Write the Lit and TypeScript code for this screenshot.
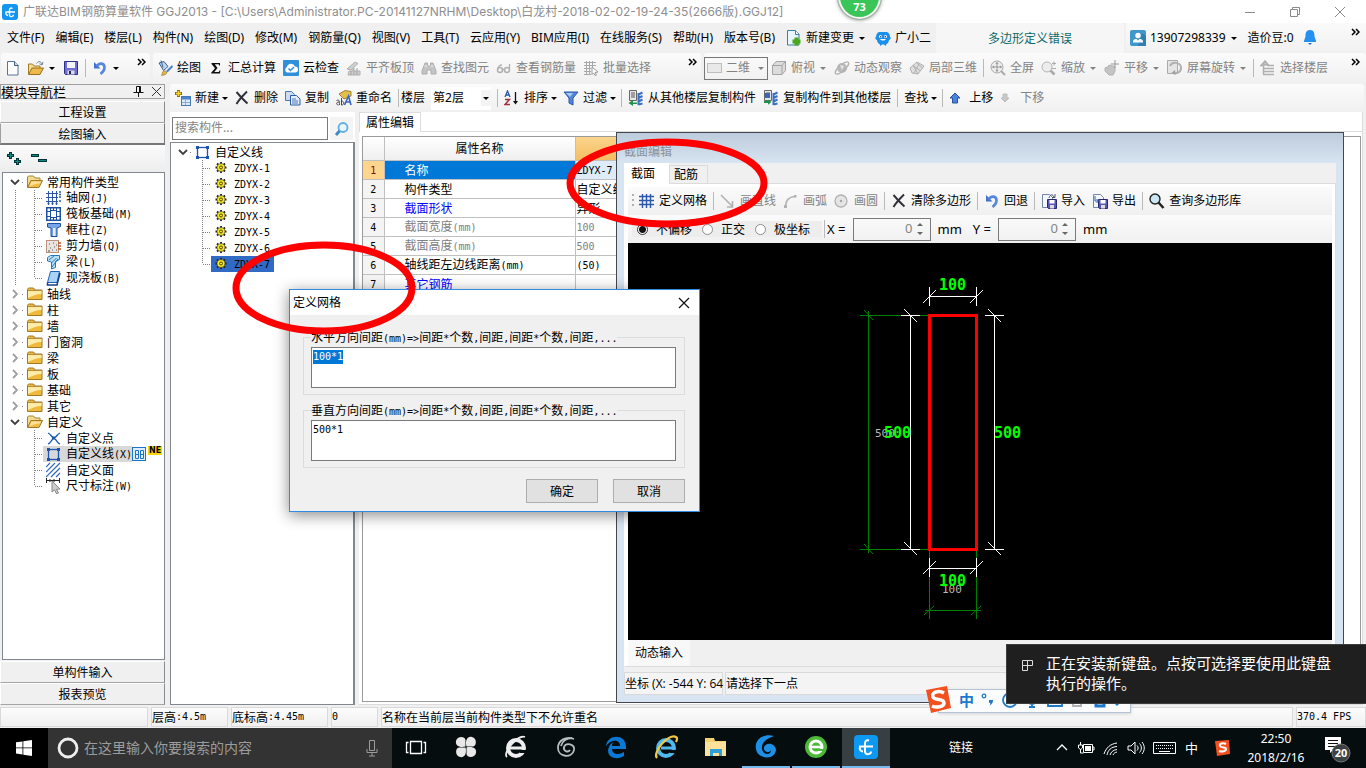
import { LitElement, html, css, svg, nothing } from "lit";
import { customElement, state } from "lit/decorators.js";
import { classMap } from "lit/directives/class-map.js";

type Fragment = ReturnType<typeof svg>;

const disk = svg`<path d="M6.500 6.500h9v9h-8l-1-1z" fill="#5a55b8" stroke="#2c2870"/><rect x="8.500" y="7" width="5" height="3.500" fill="#fff"/><rect x="9" y="12" width="4" height="3.500" fill="#ddd"/>`;
const page = svg`<path d="M1.500 1.500h7l3 3v10h-10z" fill="#f4f8fc" stroke="#7387a6"/>`;
const copyTo = svg`<path d="M1.500.500h7v10h-7z" fill="#e8e8e8" stroke="#666"/><path d="M3 3h4M3 5h4M3 7h4" stroke="#555"/><path d="M10.500 4.500l4-2M10.500 8l4-2M10.500 11.500l4-2M10.500 14.500l4-1M10.500 3v12" stroke="#3a6fc4" stroke-width="2"/>`;

const ICONS: Record<string, Fragment> = {
  app: svg`<rect width="16" height="16" rx="3" fill="#1296f0"/><path d="M10.500 4.500c-2-1.200-3 0-3 1.500v5c0 2.500 4 2 4-.3M3.500 8h9.500M4 8c-.5 2 .5 3.300 2 3.500" fill="none" stroke="#fff" stroke-width="1.400"/>`,
  file: svg`<path d="M2.500 1.500h7l3.500 3.500v10h-10.500z" fill="#fbfdff" stroke="#5b7396"/><path d="M9.500 1.500v4h4" fill="#cfdded" stroke="#41597e"/>`,
  open: svg`<path d="M.500 14v-10h4l1.500 2h6v2" fill="#f5dc8c" stroke="#a07a2c"/><path d="M.500 14.500l3.500-6.500h11.500l-3.500 6.500z" fill="#ecb94c" stroke="#9a7020"/><path d="M8.500 3.500c2-3 5-2 5.500 1m1-2.500l-1 3-2.500-1.200" fill="none" stroke="#687f96"/>`,
  save: svg`<path d="M1.500 1.500h13v13h-12l-1-1z" fill="#6f6fd0" stroke="#2e2e86"/><rect x="4" y="2" width="8" height="6" fill="#f3f3fc"/><rect x="4.500" y="10.500" width="7" height="4" fill="#dcdce8"/><rect x="6" y="11" width="2" height="3" fill="#23235c"/>`,
  undo: svg`<path d="M2 2v6.500h6.500z" fill="#3f72cc"/><path d="M4.500 6.500C7 2.500 12.500 2.500 12.500 7.500c0 3-2 5-4 6.500" fill="none" stroke="#5585dd" stroke-width="2.600"/>`,
  paint: svg`<path d="M2 3l5-1.500 4 5-4.500 4z" fill="#b9d7f4" stroke="#3d5f8c"/><path d="M4 0.500l2 7" stroke="#3d5f8c"/><path d="M15 5l-6 6 1.500 1.500L16 7z" fill="#4d82cc"/><path d="M6 11.500c2-1.500 4 0 3.500 2-1.500 2-4 1.500-5 2 1-1 .5-3 1.500-4z" fill="#e3b43c" stroke="#8c6a16" stroke-width=".6"/>`,
  sigma: svg`<path d="M3.500 3h8.500v2.500h-.8l-.5-1.300H6.800L9.500 8l-3.200 4h4.500l.8-1.600h.8L12 13.500H3.200v-.8L7 8.300 3.500 4z" fill="#111"/>`,
  cloud: svg`<rect width="16" height="16" rx="1" fill="#2f8fd8"/><path d="M4 12.500a3 3 0 0 1 0-5.500 4.200 4.200 0 0 1 8-.5 3 3 0 0 1 0 6z" fill="#fff"/><path d="M5.500 8.500l2 2 3.500-3.500" fill="none" stroke="#2f8fd8" stroke-width="1.500"/>`,
  align: svg`<path d="M1 9l8-7 3 1.500-5 4.500v2zM3 11h11v4H2z" fill="#cfcfcf" stroke="#b0b0b0"/><path d="M5 11v4M8 8v7M11 8v7" stroke="#a5a5a5"/>`,
  bino: svg`<path d="M4 3h2.500v3h3V3H12l3 8v3h-5v-4H6v4H1v-3z" fill="#c4c4c4" stroke="#adadad"/><path d="M3.500 6h3M9.500 6h3" stroke="#eee"/>`,
  glasses: svg`<circle cx="4" cy="10" r="2.500" fill="none" stroke="#b0b0b0" stroke-width="1.500"/><circle cx="11" cy="10" r="2.500" fill="none" stroke="#b0b0b0" stroke-width="1.500"/><path d="M6.500 9.500h2M2 9C2 6 4 5 6 5M13.500 9.500V4" fill="none" stroke="#b0b0b0" stroke-width="1.300"/>`,
  batch: svg`<path d="M1 2.500h12M1 5.500h12M1 8.500h7M1 11.500h7M1 14.500h7M3.500 1v14M6.500 1v14M9.500 1v6" stroke="#a8a8a8"/><path d="M9 7l6 5-3 .5 1.500 2.500-1.500.5-1.500-2.500-1.500 1.500z" fill="#fff" stroke="#999"/>`,
  flat: svg`<rect x=".5" y="3.500" width="14" height="9" fill="#e9e9e9" stroke="#bdbdbd"/>`,
  cube: svg`<path d="M1.500 5.500l3.500-4h9.500v9l-3.500 4H1.500z" fill="#dcdcdc" stroke="#a3a3a3"/><path d="M1.500 5.500h9.500v9M11 5.500l3.500-4" fill="none" stroke="#a3a3a3"/>`,
  orbit: svg`<circle cx="8" cy="8" r="5" fill="#b9b9b9"/><ellipse cx="8" cy="8" rx="8.500" ry="3" transform="rotate(-42 8 8)" fill="none" stroke="#b2b2b2" stroke-width="1.300"/><path d="M6 5l4 1-2 4z" fill="#e6e6e6"/>`,
  local3d: svg`<path d="M1 8l7-6 7 4-6 8-6-1z" fill="#dedede" stroke="#b0b0b0"/><path d="M4 5.500l7 5M7.500 2.500L13.500 8M5 13l5-9M9 14l-5-9" stroke="#b0b0b0"/>`,
  full: svg`<circle cx="7" cy="7" r="6" fill="#ededed" stroke="#a8a8a8"/><path d="M7 2.500v9M2.500 7h9" stroke="#999"/><path d="M7 2l-1.500 2h3zM7 12l-1.500-2h3zM2 7l2-1.500v3zM12 7l-2-1.500v3z" fill="#999"/><path d="M11 11l4 4" stroke="#aaa" stroke-width="2"/>`,
  zoom: svg`<circle cx="6" cy="7" r="5" fill="#ededed" stroke="#b5b5b5"/><path d="M9.500 10.500l4 4" stroke="#aaa" stroke-width="2.500"/><path d="M11 3.500h4M13 1.500v4M11 8.500h4" stroke="#aaa"/>`,
  pan: svg`<path d="M1 8l1.500-1L4 9V6l2-1 2 1h2l1 1v4l-2 4H5l-4-4z" fill="#c4c4c4" stroke="#b0b0b0"/><path d="M11 0v8M7 4h8" stroke="#999"/>`,
  rotate: svg`<path d="M.500.500h10v13H.500z" fill="#e5e5e5" stroke="#aaa"/><path d="M3 6c2-5 11-4 11 2 0 4-4 6-8 5" fill="none" stroke="#b0b0b0" stroke-width="2"/><path d="M8 10l-3.500 3 4 2z" fill="#a0a0a0"/>`,
  floors: svg`<path d="M1 5.500L5 1l3 3.500zM3.500 5v9M3 8.500h11M3 11.500h11M3 14.500h11M7 5.500h7" stroke="#b0b0b0" fill="#c5c5c5" stroke-width="1.500"/>`,
  create: svg`<rect x="6.500" y="6.500" width="9" height="9" fill="#dce9f8" stroke="#4878b4"/><rect x="7" y="7" width="8" height="2.500" fill="#4b84cd"/><path d="M7 12.500h8M10.500 10v5" stroke="#8cabd4"/><path d="M3.500 0v7M0 3.500h7" stroke="#8e6d08" stroke-width="3"/><path d="M3.500 1v5M1 3.500h5" stroke="#f6d535" stroke-width="1.600"/>`,
  cross: svg`<path d="M2.500 2C6 6 10 10.500 13.500 13.500M13 1.500C9 5.500 5 9.500 2.500 14" fill="none" stroke="#2f3038" stroke-width="1.900"/>`,
  copy: svg`<path d="M.500 1.500h6l3 3v6h-9z" fill="#cbdcf3" stroke="#4c76b4"/><path d="M5.500 5.500h6l3.500 3.500v6H5.500z" fill="#e3eefc" stroke="#2d5aa2"/><path d="M7 9h4M7 11h6M7 13h6" stroke="#4c76b4"/>`,
  rename: svg`<path d="M3 4l6-3.500 6 1V6L8 9z" fill="#e4bf4e" stroke="#8c6a16" stroke-width=".8"/><path d="M8.500 15l4-9 2.500 9M9.500 12h5" fill="none" stroke="#3a62c0" stroke-width="1.600"/><path d="M.500 10.500c3-1 3 0 3 4.500M3 12c-3 0-3 3-.5 3M5.500 8v7c3 0 3-4 0-4" fill="none" stroke="#444"/>`,
  sort: svg`<path d="M1 7l2.500-6L6 7M2 5h3" fill="none" stroke="#2f55a8" stroke-width="1.300"/><path d="M1 9.500h4.500L1 14.500h5" fill="none" stroke="#a02f3c" stroke-width="1.400"/><path d="M11.500 2v11" stroke="#111" stroke-width="1.300"/><path d="M9 11h5l-2.500 3.500z" fill="#111"/>`,
  filter: svg`<path d="M1 2h14l-5 6v7l-4-2V8z" fill="#4f86e0" stroke="#2c55a8"/><path d="M3 3h7l-3 4z" fill="#a9cbfa"/>`,
  fromFloor: svg`${copyTo}<path d="M9 12.500H5v-2.500L.500 13 5 16V14h4z" fill="#21914a"/>`,
  toFloor: svg`${copyTo}<path d="M2 3h5v5H2z" fill="#3e63b8"/><path d="M1 11h4V9.500L8.500 12 5 14.800V13H1z" fill="#21914a"/>`,
  up: svg`<path d="M6 3l5 5H8.500v5h-5V8H1z" fill="#4a82e2" stroke="#2b509c"/>`,
  down: svg`<path d="M5 12L1 8h2V4h4v4h2z" fill="#c8c8c8" stroke="#bcbcbc"/>`,
  change: svg`<path d="M1.500.500h8l3.500 3.500v11H1.500z" fill="#eaf6fd" stroke="#3c7fa4"/><path d="M9.500.500v4H13" fill="#fff" stroke="#3c7fa4"/><path d="M10.500 7.500v8M6.500 11.500h8" stroke="#49a81b" stroke-width="4"/>`,
  robot: svg`<path d="M4 2h8c2 1 3 2.500 3 5l1 1-1.500 2H14c-.3 2-1 3.500-2.500 4l-1 2-1.500-1.500H7L5.500 16l-1-2C3 13.500 2.300 12 2 10H1.500L0 8l1-1c0-2.500 1-4 3-5z" fill="#1c8fe8"/><circle cx="5.500" cy="6.500" r="1.500" fill="#fff"/><circle cx="10.500" cy="6.500" r="1.500" fill="#fff"/><circle cx="5.700" cy="6.700" r=".7" fill="#123"/><circle cx="10.300" cy="6.700" r=".7" fill="#123"/><path d="M5 9c1.500 2 4.500 2 6 0z" fill="#fff"/>`,
  user: svg`<rect width="16" height="16" rx="2" fill="#3f97cc"/><path d="M8 16h8V6l-4-3z" fill="#2f7fb2"/><circle cx="8" cy="5.500" r="2.700" fill="#fff"/><path d="M3 12.500V11c1-2 2.500-2 3.500-2L8 10.500 9.500 9c1 0 2.500 0 3.500 2v1.500z" fill="#fff"/>`,
  bell: svg`<path d="M6 0c4 0 4.500 3 4.500 6.500L12 11v1H0v-1l1.500-4.500C1.500 3 2 0 6 0z" fill="#2490f2"/><path d="M4 13h4l-2 2z" fill="#1b6fc8"/>`,
  grid: svg`<path d="M0 3.500h15M0 7.500h15M0 11.500h15M3.500 1v14M7.500 1v14M11.500 1v14" stroke="#2b57ac" stroke-width="1.400"/>`,
  axis: svg`<path d="M0 3.500h12M0 7.500h12M0 11.500h12M2.500 1v14M6.500 1v14M10.500 1v14" stroke="#2b57ac"/><path d="M13 2h2M13 4.500h2M13 7h2M13 11h2M1.500 13.500h2M5.500 13.500h2M9.500 13.500h2" stroke="#2b57ac" stroke-width="1.500"/>`,
  raft: svg`<rect x=".75" y="1.750" width="13.500" height="12.500" fill="#fff" stroke="#1d50a0" stroke-width="1.500"/><rect x="4.500" y="4.500" width="6" height="7" fill="none" stroke="#1d50a0"/><path d="M4.500 1v3M7.500 1v3M10.500 1v3M4.500 12v3M7.500 12v3M10.500 12v3M1 5.500h3M1 10.500h3M11 5.500h3M11 10.500h3" stroke="#1d50a0"/>`,
  column: svg`<path d="M1.500 1.500h13v3l-3.500 1.500v8.500h-6V6l-3.500-1z" fill="#78a5ea" stroke="#1d50a0"/><path d="M7 6h2.500v8H7z" fill="#e2eefc"/>`,
  wall: svg`<rect x=".5" y="2.500" width="12" height="12" fill="#e9e4e0" stroke="#b9917c"/><path d="M3 6h1M7 5h1M10 7h1M4 10h1M8 9h1M6 12h1M10 12h1M2 13h2" stroke="#555" stroke-width="1.200"/><path d="M12 5h3M12 8h3M12 11h3" stroke="#c0531c" stroke-width="1.300"/>`,
  beam: svg`<path d="M1.500 3.500l3-2h9v4l-4 2v6l-4 1.500v-7l-4-1z" fill="#b9e0f6" stroke="#2478b8"/><path d="M3 6l5-4M5.500 9l5-5M6 13l6-8" stroke="#2478b8"/>`,
  slab: svg`<path d="M4.500 1.500h9l-2.500 11H1.500z" fill="#a9d2f6" stroke="#2360b0"/><path d="M1.500 12.500v2.500h9.500l3-12" fill="none" stroke="#123f86" stroke-width="1.500"/>`,
  folder: svg`<path d="M.500 13.500V3.500L1.500 2h5l1.500 2h7v9.500z" fill="#efb93c" stroke="#a07828"/><path d="M1 5h13.500v3c-5 0-9 2-13.500 4z" fill="#fdebA8"/><path d="M1 4.500h14" stroke="#b88d34"/>`,
  folderOpen: svg`<path d="M.500 13.500V3L1.500 2h5l1.500 2h5v3" fill="#f3dc8f" stroke="#a98435"/><path d="M.500 13.500L4 6.500h11.500L12 13.500z" fill="#f0bc48" stroke="#a07828"/><path d="M4.500 7.500h9.500l-1 2c-4 0-7 1-10.500 3z" fill="#fbe29a"/>`,
  point: svg`<path d="M2 3c3 1 3 4 6 5 3-1 3-4 6-5M2 14c3-1 3-4 6-6 3 2 3 5 6 6" fill="none" stroke="#1e5aa8" stroke-width="1.300"/><rect x="6" y="6.500" width="3" height="3" fill="#1e5aa8"/>`,
  line: svg`<rect x="2.500" y="3.500" width="10" height="10" fill="none" stroke="#1c54b0" stroke-width="1.300"/><path d="M1 2h3v3H1zM11 2h3v3h-3zM1 12h3v3H1zM11 12h3v3h-3z" fill="#1c54b0"/>`,
  area: svg`<path d="M0 5l4-4M0 10l9-9M0 15l14-14M5 15l9-9M10 15l4-4" stroke="#3569b8" stroke-width="1.200"/>`,
  dim: svg`<path d="M.500 0v5M13.500 0v5M1 2.500h12M4 1v3M8 1v3" stroke="#222"/><path d="M6 3l8 8-3.500.3L12.500 15l-2 .8-2-4L6 14z" fill="#ccc" stroke="#888"/>`,
  gear: svg`<path d="M7 2v11M1.500 7.500h11M3 3.500l8 8M11 3.500l-8 8" stroke="#222" stroke-width="1.800"/><circle cx="7" cy="7.500" r="4" fill="#f7ea1e" stroke="#333" stroke-width=".6"/><circle cx="7" cy="7.500" r="1.500" fill="#f7ea1e" stroke="#222" stroke-width=".8"/>`,
  lens: svg`<circle cx="9" cy="6.500" r="4.500" fill="#e8f5fd" stroke="#5db0e4" stroke-width="1.800"/><path d="M5.500 10L2 14" stroke="#3d87c8" stroke-width="2.800"/>`,
  drawLine: svg`<path d="M1 2l11 11M12.500 8v6H7" fill="none" stroke="#b2b2b2" stroke-width="1.600"/>`,
  drawArc: svg`<path d="M2.500 13C3 7 6 4 11.500 3.500" fill="none" stroke="#b2b2b2" stroke-width="1.500"/><rect x="1" y="12" width="3" height="3" fill="#b2b2b2"/><rect x="11" y="2" width="2.500" height="2.500" fill="#b2b2b2"/>`,
  drawCircle: svg`<circle cx="7" cy="8" r="6" fill="#e5e5e5" stroke="#b2b2b2" stroke-width="1.300"/><circle cx="7" cy="8" r="1.200" fill="#a5a5a5"/>`,
  importFile: svg`${page}${disk}<path d="M8 5c1-4 4-4 5-1m1-3v3.500h-3" fill="none" stroke="#44566e"/>`,
  exportFile: svg`${page}${disk}<path d="M3 3v5h3M4.500 6l2 2-2 2" fill="none" stroke="#2c62ae"/>`,
  search: svg`<circle cx="6" cy="6" r="5" fill="#c9e6f4" stroke="#222" stroke-width="1.400"/><path d="M9.500 9.500l5 5.500" stroke="#222" stroke-width="2.500"/>`,
  pin: svg`<path d="M5.500 2.500h4v6h-4zM2.500 8.500h10M7.500 9v4M8.500 3v5" fill="none" stroke="#111"/>`,
  close: svg`<path d="M3 3l9 9M12 3l-9 9" stroke="#333"/>`,
  expand: svg`<path d="M3.500 1v7M0 4.500h7M10.500 7v7M7 10.500h7" stroke="#033" stroke-width="3"/><path d="M3.500 2v5M1 4.500h5M10.500 8v5M8 10.500h5" stroke="#0b8a86"/>`,
  collapse: svg`<path d="M0 4.500h8M7 9.500h9" stroke="#033" stroke-width="3"/><path d="M1 4.500h6M8 9.500h7" stroke="#0b8a86"/>`,
  columns: svg`<rect x=".5" y="1.500" width="13" height="13" fill="#dceeff" stroke="#1c74c8"/><path d="M3.500 4.500h3v8h-3zM8.500 4.500h3v8h-3zM3.500 8.500h3M8.500 8.500h3" fill="none" stroke="#1c74c8"/>`,
};

const icon = (name: string, width = 16) =>
  html`<svg class="icon" width=${width} height="16" viewBox="0 0 ${width} 16" aria-hidden="true">${ICONS[name]}</svg>`;

const arrow = html`<svg class="arrow" width="8" height="16" viewBox="0 0 8 16" aria-hidden="true"><path d="M1 7h6L4 10z" /></svg>`;
const more = html`<svg class="more" width="9" height="8" viewBox="0 0 9 8" aria-hidden="true"><path d="M1 1l3 3-3 3M5 1l3 3-3 3" fill="none" stroke="#000" stroke-width="1.500" /></svg>`;
const sep = html`<span class="sep"></span>`;

/** Sets runs of Latin characters in the half-width face that goes with full-width glyphs. */
const mixed = (text: string) =>
  text.split(/([\x20-\x7e]+)/).map((part, i) => (i % 2 ? html`<span class="half">${part}</span>` : part));

interface Tool {
  icon?: string;
  text?: string;
  menu?: boolean;
  off?: boolean;
}

const toolButton = (t: Tool | "|") =>
  t === "|"
    ? sep
    : html`<button class=${classMap({ tool: true, off: !!t.off })} ?disabled=${t.off} aria-label=${t.text ?? t.icon ?? ""}>
        ${t.icon ? icon(t.icon) : nothing}${t.text ? html`<span>${t.text}</span>` : nothing}${t.menu ? arrow : nothing}
      </button>`;

interface Node {
  text: string;
  icon: string;
  open?: boolean;
  last?: boolean;
  children?: Node[];
}

const COMPONENTS: Node[] = [
  {
    text: "常用构件类型", icon: "folderOpen", open: true, children: [
      { text: "轴网(J)", icon: "axis" },
      { text: "筏板基础(M)", icon: "raft" },
      { text: "框柱(Z)", icon: "column" },
      { text: "剪力墙(Q)", icon: "wall" },
      { text: "梁(L)", icon: "beam" },
      { text: "现浇板(B)", icon: "slab" },
    ],
  },
  ...["轴线", "柱", "墙", "门窗洞", "梁", "板", "基础", "其它"].map((text) => ({ text, icon: "folder" })),
  {
    text: "自定义", icon: "folderOpen", open: true, last: true, children: [
      { text: "自定义点", icon: "point" },
      { text: "自定义线(X)", icon: "line" },
      { text: "自定义面", icon: "area" },
      { text: "尺寸标注(W)", icon: "dim" },
    ],
  },
];

const LINES: Node[] = [
  {
    text: "自定义线", icon: "line", open: true, last: true,
    children: [1, 2, 3, 4, 5, 6, 7].map((n) => ({ text: `ZDYX-${n}`, icon: "gear" })),
  },
];

const MENUS = ["文件(F)", "编辑(E)", "楼层(L)", "构件(N)", "绘图(D)", "修改(M)", "钢筋量(Q)", "视图(V)", "工具(T)", "云应用(Y)", "BIM应用(I)", "在线服务(S)", "帮助(H)", "版本号(B)"];

const DRAW_TOOLS: Tool[] = [
  { icon: "paint", text: "绘图" },
  { icon: "sigma", text: "汇总计算" },
  { icon: "cloud", text: "云检查" },
  { icon: "align", text: "平齐板顶", off: true },
  { icon: "bino", text: "查找图元", off: true },
  { icon: "glasses", text: "查看钢筋量", off: true },
  { icon: "batch", text: "批量选择", off: true },
];

const VIEW_TOOLS: (Tool | "|")[] = [
  { icon: "cube", text: "俯视", menu: true, off: true },
  { icon: "orbit", text: "动态观察", off: true },
  { icon: "local3d", text: "局部三维", off: true },
  "|",
  { icon: "full", text: "全屏", off: true },
  { icon: "zoom", text: "缩放", menu: true, off: true },
  { icon: "pan", text: "平移", menu: true, off: true },
  { icon: "rotate", text: "屏幕旋转", menu: true, off: true },
  "|",
  { icon: "floors", text: "选择楼层", off: true },
];

const SECTION_TOOLS: (Tool | "|")[] = [
  { icon: "grid", text: "定义网格" },
  "|",
  { icon: "drawLine", text: "画直线", off: true },
  { icon: "drawArc", text: "画弧", off: true },
  { icon: "drawCircle", text: "画圆", off: true },
  "|",
  { icon: "cross", text: "清除多边形" },
  "|",
  { icon: "undo", text: "回退" },
  "|",
  { icon: "importFile", text: "导入" },
  { icon: "exportFile", text: "导出" },
  "|",
  { icon: "search", text: "查询多边形库" },
];

const PROPERTIES: { name: string; value: string; kind?: string }[] = [
  { name: "名称", value: "ZDYX-7", kind: "current" },
  { name: "构件类型", value: "自定义线" },
  { name: "截面形状", value: "异形", kind: "key" },
  { name: "截面宽度(mm)", value: "100", kind: "dim" },
  { name: "截面高度(mm)", value: "500", kind: "dim" },
  { name: "轴线距左边线距离(mm)", value: "(50)" },
  { name: "其它钢筋", value: "", kind: "key" },
];

const TASKS: { name: string; art: Fragment; kind?: string }[] = [
  { name: "任务视图", art: svg`<path d="M8.500 8.500h11v12h-11zM6.500 9.500h-2v10h2M21.500 9.500h2v10h-2" fill="none" stroke="#fff" stroke-width="1.300"/>` },
  { name: "风扇", art: svg`<g fill="#e8e8e8"><path d="M13.500 13.500C8 15 3 13 4 8c1-5 9-5 9.500-1zM14.500 13.500C13 8 15 3 20 4c5 1 5 9 1 9.500zM14.500 14.500C20 13 25 15 24 20c-1 5-9 5-9.500 1zM13.500 14.500C15 20 13 25 8 24c-5-1-5-9-1-9.500z"/></g>` },
  { name: "浏览器", art: svg`<circle cx="14" cy="15" r="8" fill="none" stroke="#eee" stroke-width="4"/><path d="M8 15h14" stroke="#eee" stroke-width="3"/><path d="M17 17h10v3h-9z" fill="#050d0f"/><path d="M5 24C0 20 16 1 23 4" fill="none" stroke="#eee" stroke-width="1.800"/>` },
  { name: "旋风", art: svg`<path d="M22 6c-8-3-16 1-16 9 0 9 14 11 16 2 1-6-8-8-10-3-1 4 4 6 6 3M20 5c-5 0-10 3-11 8" fill="none" stroke="#b9bdbd" stroke-width="1.800"/>` },
  { name: "Edge", art: svg`<path d="M4 13C5 1 24 0 24 14v2H10c0 6 8 6 12 3v4C12 29 3 22 7 14c1-3 3-4 5-5-2 1-2 3-2 4h8C18 6 9 6 4 13z" fill="#0a78d4"/>` },
  { name: "Internet Explorer", art: svg`<circle cx="14" cy="15" r="8" fill="none" stroke="#4fb8ee" stroke-width="4"/><path d="M9 15h13" stroke="#4fb8ee" stroke-width="3"/><path d="M17 17h9v3h-8z" fill="#050d0f"/><path d="M5 25C0 20 16 0 24 4c2 1 1 3 0 5" fill="none" stroke="#f5c83a" stroke-width="2.200"/>` },
  { name: "文件资源管理器", art: svg`<path d="M3 5h9l1 3h11v15H3z" fill="#f4d271"/><path d="M3 9h21v14H3z" fill="#fbe29a"/><path d="M8 23v-7h12v7h-3v-3h-6v3z" fill="#2e9fd8"/>` },
  { name: "广联达", art: svg`<path d="M22 3C11 0 2 7 4 16c1 10 19 12 20 1 0-6-9-9-12-3-1 5 5 7 7 3 0 6-8 5-9-1C9 8 17 5 22 3z" fill="#1c8fe6"/>`, kind: "running" },
  { name: "360浏览器", art: svg`<circle cx="14" cy="14" r="11" fill="#4cb838"/><circle cx="14" cy="14" r="6" fill="none" stroke="#fff" stroke-width="3"/><path d="M8 14h12" stroke="#fff" stroke-width="2.500"/><path d="M16 16h7v2h-7z" fill="#4cb838"/>`, kind: "running" },
  { name: "广联达BIM钢筋算量", art: svg`<rect x="2" y="2" width="24" height="24" rx="4" fill="#0d98f2"/><path d="M17 7.500c-3-1-4 1-4 3v8c0 4 6 3 6 0M7 13.500h14M8 13.500c-1 3 1 5 3 5" fill="none" stroke="#fff" stroke-width="2"/>`, kind: "active" },
];

@customElement("app-root")
export class AppRoot extends LitElement {
  @state() private horizontal = "100*1";
  @state() private vertical = "500*1";

  static styles = css`
    :host {
      --ui: "Noto Sans", "Noto Sans CJK SC", sans-serif;
      --song: "Noto Sans CJK SC", sans-serif;
      position: relative;
      display: flex;
      flex-direction: column;
      height: 100vh;
      overflow: hidden;
      background: #f0f0f0;
      color: #000;
      font: 12px/16px var(--ui);
    }
    * { box-sizing: border-box; }
    button, input, select, textarea { font: inherit; color: inherit; margin: 0; }
    button { border: 0; padding: 0; background: none; white-space: nowrap; }
    svg { display: block; flex: none; }
    .song { font-family: var(--song); }
    .half { font-family: "DejaVu Sans Mono", monospace; font-size: 10px; white-space: pre; }
    .arrow { fill: currentColor; }
    .sep { width: 1px; height: 18px; margin: 0 -1px; background: #b9b9b9; flex: none; }

    .title { display: flex; align-items: center; flex: none; height: 23px; padding: 0 18px 0 2px; gap: 5px; background: #fff; color: #8e8e8e; font-family: Inter, var(--song); white-space: nowrap; }
    .title h1 { flex: 1; margin: 0; font: inherit; }
    .caption { display: flex; gap: 29px; }
    .caption svg { stroke: #8a8a8a; fill: none; }
    .ball { position: absolute; z-index: 5; left: 838px; top: -26px; width: 43px; height: 45px; padding-top: 24px; border: 2px solid #f4f4f4; outline: 1px solid #9bb49e; border-radius: 50%; background: #3ac558; color: #fff; font: bold 11px/14px var(--ui); text-align: center; box-shadow: 0 1px 4px #888; }

    .menubar { display: grid; grid-template-columns: 1fr 188px 240px; gap: 2px; flex: none; height: 30px; }
    .menus { display: flex; align-items: center; gap: 11px; padding-left: 7px; white-space: nowrap; }
    .menus .tool { margin-right: -2px; }
    .notice { display: grid; place-items: center; background: #f6f6f6; color: #0c6a6a; border-radius: 3px; }
    .notice a { color: inherit; text-decoration: none; }
    .account { display: flex; align-items: center; gap: 4px; padding: 0 6px 0 4px; background: linear-gradient(#fafafa, #f1f1f1); }
    .account .beans { margin: 0 6px 0 6px; }
    .account .more, .band .more { margin: 0 0 12px auto; }

    .toolbars { display: grid; grid-template-columns: 149px 548px 1fr; gap: 3px; flex: none; height: 30px; padding-left: 1px; }
    .band { display: flex; align-items: center; gap: 7px; padding: 0 4px; background: linear-gradient(#fbfbfb, #f0f0f0); border-radius: 3px; min-width: 0; }
    .band.view { padding: 0 6px 0 0; }
    .band.view .mode { margin-right: -4px; }
    .tool { display: flex; align-items: center; gap: 4px; flex: none; height: 24px; }
    .tool.off { color: #838383; }
    .mode { display: flex; align-items: center; height: 23px; padding: 0 2px; gap: 3px; border: 1px solid #777; color: #838383; flex: none; }
    select { appearance: none; border: 0; padding: 0; background: none; outline: 0; }
    .mode select { width: 28px; }

    .work { display: flex; flex: 1; min-height: 0; padding: 1px 0 2px; }
    .nav { display: flex; flex-direction: column; flex: none; width: 165px; font-family: var(--song); }
    .navhead { display: flex; align-items: center; height: 15px; margin-bottom: 2px; border: 1px solid #a0a0a0; gap: 3px; font-size: 13px; line-height: 13px; }
    .navhead span { flex: 1; }
    .navbtn { height: 22px; border: 1px solid; border-color: #fff #8c8c8c #a5a5a5 #fff; background: #f0f0f0; text-align: center; flex: none; }
    .navbtn.on { border-color: #fff #777 #777 #a0a0a0; border-bottom-width: 2px; }
    .navtools { display: flex; align-items: center; gap: 8px; height: 27px; padding-left: 7px; background: linear-gradient(#fbfbfb, #ededed); flex: none; }
    .navtree { flex: 1; min-height: 0; margin: 0 0 1px 2px; border: 1px solid #828790; background: #fff; padding-top: 1px; overflow: hidden; }
    .row { display: flex; align-items: center; height: 16px; white-space: nowrap; font-family: var(--song); }
    .item { display: flex; align-items: center; gap: 4px; height: 16px; padding-left: 3px; }
    .item.picked { background: #d8d8d8; }
    .item.chosen { background: #316ac5; color: #000; padding-right: 4px; }
    .guide { fill: none; stroke: #808080; }
    .ne { margin: -8px 0 0 1px; padding: 0 1px; background: #f8d808; color: #000; font: bold 8px/9px "DejaVu Sans", sans-serif; }

    .main { display: flex; flex-direction: column; flex: 1; min-width: 0; padding-left: 5px; }
    .main > .band { flex: none; height: 28px; margin-right: 2px; padding-left: 5px; }
    .main .tool .arrow { margin: 0 -2px; }
    .floor { display: flex; align-items: center; gap: 6px; margin-left: -4px; }
    .floor select { width: 50px; padding-left: 2px; }
    .combo { display: flex; align-items: center; height: 23px; background: #fff; }
    .combo .arrow { width: 10px; background: #f4f4f4; }
    .panes { display: flex; flex: 1; min-height: 0; gap: 4px; }
    .listpane { display: flex; flex-direction: column; width: 185px; flex: none; }
    .find { display: flex; gap: 2px; height: 30px; padding: 5px 2px 2px 2px; background: #fff; flex: none; }
    .find input { flex: 1; min-width: 0; border: 1px solid #7a7a7a; padding: 0 2px 3px; background: #fff; outline: 0; font-family: var(--song); }
    .find input::placeholder { color: #858585; opacity: 1; }
    .find button { display: grid; place-items: center; width: 23px; background: #f4f4f4; }
    .list { flex: 1; border: 1px solid #828790; border-right-width: 2px; background: #fff; padding-top: 1px; }
    .props { display: flex; flex-direction: column; flex: 1; min-width: 0; margin-right: 3px; background: #fff; border-right: 1px solid #dcdcdc; border-bottom: 1px solid #dcdcdc; }
    .tabs { display: flex; height: 20px; flex: none; border-bottom: 1px solid #dcdcdc; }
    .tabs button { height: 20px; padding: 0 6px; border: 1px solid #dcdcdc; border-bottom: 0; background: #fff; }
    .tablebox { flex: 1; margin: 4px 1px 2px 3px; padding-right: 40px; border: 1px solid #9a9a9a; overflow: hidden; }
    table { width: 100%; border-collapse: collapse; table-layout: fixed; font-family: var(--song); }
    .cn { width: 21px; }
    .cname { width: 191px; }
    th, td { height: 19px; padding: 0; border: 1px solid #c0c0c0; border-top: 0; border-left: 0; font-weight: normal; text-align: left; white-space: nowrap; }
    thead th { height: 23px; text-align: center; background: linear-gradient(#fff, #efefef); }
    thead .hot { background: linear-gradient(#fbd48b, #f3be62); }
    tbody th { background: #f4f4f4; text-align: center; }
    .pname { padding-left: 20px; }
    .pval { padding-left: 1px; }
    .key .pname { color: #00f; }
    .dim td { color: #808080; }
    .current th { background: #ffd48c; color: #801010; }
    .current .pname { background: #0078d7; color: #fff; }
    .current .pval { background: #deecf9; }

    .section { position: absolute; z-index: 1; left: 616px; right: 22px; top: 132px; bottom: 65px; display: flex; flex-direction: column; padding: 0 7px 7px; border: 1px solid #44484e; background: linear-gradient(#bdccdb, #d7e4f2 30px); font-family: var(--song); }
    .section h2 { margin: 0; height: 30px; padding-top: 10px; flex: none; font: inherit; color: #8a929b; }
    .sheet { display: flex; flex-direction: column; flex: 1; min-height: 0; background: #f0f0f0; }
    .stabs { display: flex; align-items: flex-end; height: 20px; flex: none; }
    .stabs button { height: 18px; padding: 0 9px 0 4px; border: 1px solid #dcdcdc; border-bottom: 0; font-family: var(--ui); }
    .stabs .on { height: 22px; margin-bottom: -2px; padding: 0 13px 2px 6px; border-color: #fff; background: #fff; z-index: 1; }
    .frame { display: flex; flex-direction: column; flex: 1; min-height: 0; padding: 3px 3px 0; border: 1px solid #dcdcdc; border-left-color: #fff; background: #fff; font-family: var(--ui); }
    .frame .band { height: 28px; flex: none; border-radius: 0; }
    .grip { width: 2px; height: 14px; margin-right: -2px; background: repeating-linear-gradient(#b0b0b0 0 2px, transparent 2px 5px); flex: none; }
    .frame .offsets { gap: 0; padding-left: 4px; }
    .offsets label { display: flex; align-items: center; }
    .offsets input[type="radio"] { appearance: none; width: 11px; height: 11px; margin: 0 8px 0 5px; border: 1px solid #8c8c8c; border-radius: 50%; background: #fff; }
    .offsets input[type="radio"]:checked { border-color: #333; background: radial-gradient(#111 0 3px, #fff 4px); }
    .choices { display: flex; gap: 5px; padding-right: 12px; margin-right: 3px; background: #ededed; font-family: var(--song); }
    .coord { display: flex; align-items: center; gap: 7px; margin-left: 3px; margin-right: 8px; font-size: 13px; white-space: pre; }
    .spin { display: flex; width: 78px; height: 23px; border: 1px solid #7a7a7a; color: #858585; }
    .spin input { flex: 1; min-width: 0; padding: 0 4px 2px; border: 0; outline: 0; background: none; text-align: right; }
    .spin span { display: flex; flex-direction: column; justify-content: space-around; width: 13px; }
    .spin svg { fill: #666; }
    .canvas { flex: 1; min-height: 0; width: 100%; background: #000; }
    .canvas text { font-family: "DejaVu Sans Mono", monospace; }
    .dyn { height: 26px; padding: 0 7px; background: #f8f8f8; font-family: var(--ui); }
    .under { display: flex; flex: none; background: #f0f0f0; }
    .sstatus { display: flex; gap: 2px; height: 28px; flex: none; padding-top: 5px; font-family: "Open Sans", var(--ui); white-space: nowrap; }
    .sstatus div { display: flex; align-items: center; border: 1px solid #dadada; background: #f4f4f4; }
    .sstatus .xy { width: 99px; }
    .sstatus .hint { flex: 1; }

    .dialog { position: absolute; z-index: 3; left: 289px; top: 289px; width: 411px; border: 1px solid #2f8be6; background: #f0f0f0; box-shadow: 0 3px 14px #0007; font-family: var(--song); }
    .dialog header { display: flex; align-items: center; justify-content: space-between; height: 25px; padding: 0 7px 0 3px; background: #fff; font-family: var(--ui); }
    .dialog form { display: flex; flex-direction: column; padding: 14px 14px 8px 13px; }
    .dialog fieldset { height: 66px; min-width: 0; margin: 0 0 7px; padding: 0 8px 0 7px; border: 1px solid #dcdcdc; }
    .dialog legend { height: 16px; padding: 0; }
    .dialog textarea { display: block; width: 100%; height: 41px; margin-top: 2px; padding: 2px 1px; border: 1px solid #7a7a7a; outline: 0; resize: none; background: #fff; font: 10px/14px "DejaVu Sans Mono", monospace; }
    .dialog textarea::selection { background: #0078d7; color: #fff; }
    .actions { display: flex; justify-content: flex-end; gap: 15px; margin-top: 4px; }
    .actions button { width: 72px; height: 24px; border: 1px solid #adadad; background: #e1e1e1; }
    .marks { position: absolute; z-index: 4; inset: 0; width: 100%; height: 100%; pointer-events: none; fill: none; stroke: #f00; stroke-width: 7; }

    .status { display: flex; gap: 3px; flex: none; height: 20px; margin-bottom: 1px; white-space: nowrap; font-family: var(--song); }
    .status div { display: flex; align-items: center; border: 1px solid #d9d9d9; background: linear-gradient(#fcfcfc, #f0f0f0); }
    .s1 { width: 148px; }
    .s2 { width: 77px; }
    .s3 { width: 97px; }
    .s4 { width: 47px; }
    .s5 { flex: 1; }
    .s6 { width: 70px; }

    .taskbar { display: flex; flex: none; height: 40px; background: #050d0f; color: #fff; }
    .start { display: grid; place-items: center; width: 48px; background: #000; }
    .ask { display: flex; align-items: center; gap: 5px; width: 344px; padding: 0 13px 0 9px; background: #333; font-size: 14px; }
    .ask input { flex: 1; min-width: 0; padding: 0; border: 0; outline: 0; background: none; }
    .ask input::placeholder { color: #9c9c9c; opacity: 1; }
    .tasks { display: flex; gap: 2px; }
    .task { display: grid; place-items: center; width: 48px; border-bottom: 2px solid transparent; }
    .task.running { border-color: #76b9ed; }
    .task.active { border-color: #76b9ed; background: #373f42; }
    .links { align-self: center; margin-left: 59px; }
    .tray { display: flex; align-items: center; gap: 8px; margin-left: auto; }
    .tray svg { fill: none; stroke: #fff; }
    .lang { font-size: 13px; }
    .clock { width: 72px; text-align: center; line-height: 19px; }
    .center { width: 54px; display: grid; place-items: center; }

    .ime { position: absolute; z-index: 2; left: 924px; top: 686px; display: flex; align-items: center; gap: 7px; width: 207px; height: 27px; color: #1e78cc; }
    .ime::before { content: ""; position: absolute; z-index: -1; inset: 3px 0 0 14px; background: #fafcfe; border: 1px solid #b4c4d4; box-shadow: 0 1px 3px #9996; }
    .ime span { font: bold 15px/20px var(--song); }
    .toast { position: absolute; z-index: 4; right: 0; bottom: 64px; display: flex; gap: 12px; width: 360px; height: 60px; padding: 8px 28px 0 14px; border: 1px solid #3c3c3c; border-right: 0; background: #1f1f1f; color: #fff; font: 15px/20px var(--song); }
    .toast svg { margin-top: 6px; }
    .toast p { margin: 0; }
  `;

  firstUpdated() {
    const field = this.renderRoot.querySelector<HTMLTextAreaElement>("#horizontal");
    field?.focus();
    field?.select();
  }

  private tree(nodes: Node[], mark: string, markClass: string) {
    return nodes.map(
      (node) => html`
        <div class="row" role="treeitem">
          <svg class="guide" width="21" height="16" viewBox="0 0 21 16" aria-hidden="true">
            ${node.open
              ? svg`<path d="M8 6l4 4 4-4" stroke="#404040" stroke-width="1.800"/>`
              : svg`<path d="M10 4l4 4-4 4" stroke="#a0a0a0" stroke-width="1.800"/>`}
            <path d="M19 8.500h2" stroke-dasharray="1 1" />
          </svg>
          <span class="item">${icon(node.icon)}<span>${mixed(node.text)}</span></span>
        </div>
        ${(node.children ?? []).map(
          (child, i, all) => html`
            <div class="row" role="treeitem">
              <svg class="guide" width="40" height="16" viewBox="0 0 40 16" aria-hidden="true" stroke-dasharray="1 1" shape-rendering="crispEdges">
                ${node.last ? nothing : svg`<path d="M12.500 0v16"/>`}
                <path d=${`M31.500 0v${i === all.length - 1 ? 8 : 16}M32 8.500h9`} />
              </svg>
              <span class=${classMap({ item: true, [markClass]: child.text === mark })}>${icon(child.icon)}<span>${mixed(child.text)}</span></span>
              ${child.text === "自定义线(X)" ? html`${icon("columns", 15)}<span class="ne">NE</span>` : nothing}
            </div>
          `
        )}
      `
    );
  }

  private spin(label: string, id: string) {
    return html`<div class="coord">
      <label for=${id}>${label} =</label>
      <div class="spin">
        <input id=${id} inputmode="numeric" value="0" />
        <span>
          <button aria-label="增加"><svg width="7" height="4" viewBox="0 0 7 4"><path d="M0 4h6L3 1z" /></svg></button>
          <button aria-label="减少"><svg width="7" height="4" viewBox="0 0 7 4"><path d="M0 0h6L3 3z" /></svg></button>
        </span>
      </div>
      <span>mm</span>
    </div>`;
  }

  private drawing() {
    return html`<svg class="canvas" viewBox="628 243 704 397" preserveAspectRatio="xMidYMid meet" role="img" aria-label="截面">
      <g fill="none" stroke="#008000">
        <path d="M860 315.500h70M860 549.500h70M868.500 311v242M929.500 549v70M976.500 549v70M925 610.500h56" />
        <path d="M864 310l9 10M864 544l9 10M924 615l10-9M971 615l10-9" />
      </g>
      <g fill="none" stroke="#fff">
        <path d="M929.500 287v19M976.500 287v19M929 296.500h48M929.500 558v19M976.500 558v19M929 568.500h48M901 315.500h19M901 549.500h19M910.500 315v234M985 315.500h19M985 549.500h19M994.500 315v234" />
        <path d="M923 303l13-13M970 303l13-13M923 574l13-13M970 574l13-13M904 309l13 13M904 542l13 13M988 309l13 13M988 542l13 13" />
      </g>
      <rect x="929.500" y="315.500" width="47" height="234" fill="none" stroke="#f00" stroke-width="3" />
      <g fill="#b8b8b8" font-size="11"><text x="875" y="437">500</text><text x="942" y="593">100</text></g>
      <g fill="#00ff00" font-size="15" font-weight="bold">
        <text x="939" y="290">100</text><text x="939" y="586">100</text><text x="884" y="438">500</text><text x="994" y="438">500</text>
      </g>
    </svg>`;
  }

  private sectionWindow() {
    return html`<section class="section">
      <h2>截面编辑</h2>
      <div class="sheet">
        <div class="stabs" role="tablist"><button class="on" role="tab">截面</button><button role="tab">配筋</button></div>
        <div class="frame">
          <div class="band"><span class="grip"></span>${SECTION_TOOLS.map(toolButton)}</div>
          <div class="band offsets">
            <span class="grip"></span>
            <div class="choices">
              ${["不偏移", "正交", "极坐标"].map((t, i) => html`<label><input type="radio" name="offset" ?checked=${i === 0} />${t}</label>`)}
            </div>
            <span class="sep"></span>${this.spin("X", "offset-x")}${this.spin("Y", "offset-y")}
          </div>
          ${this.drawing()}
          <div class="under"><button class="dyn">动态输入</button></div>
        </div>
        <div class="sstatus"><div class="xy">坐标 (X: -544 Y: 64</div><div class="hint">请选择下一点</div></div>
      </div>
    </section>`;
  }

  private dialog() {
    return html`<div class="dialog" role="dialog" aria-label="定义网格">
      <header>定义网格<button aria-label="关闭"><svg width="16" height="16" viewBox="0 0 16 16"><path d="M3 3l10 10M13 3L3 13" stroke="#111" stroke-width="1.200" /></svg></button></header>
      <form @submit=${(e: Event) => e.preventDefault()}>
        <fieldset>
          <legend><label for="horizontal">${mixed("水平方向间距(mm)=>间距*个数,间距,间距*个数,间距,...")}</label></legend>
          <textarea id="horizontal" spellcheck="false" .value=${this.horizontal} @input=${(e: Event) => (this.horizontal = (e.target as HTMLTextAreaElement).value)}></textarea>
        </fieldset>
        <fieldset>
          <legend><label for="vertical">${mixed("垂直方向间距(mm)=>间距*个数,间距,间距*个数,间距,...")}</label></legend>
          <textarea id="vertical" spellcheck="false" .value=${this.vertical} @input=${(e: Event) => (this.vertical = (e.target as HTMLTextAreaElement).value)}></textarea>
        </fieldset>
        <div class="actions"><button>确定</button><button type="button">取消</button></div>
      </form>
    </div>`;
  }

  private taskbar() {
    return html`<footer class="taskbar">
      <button class="start" aria-label="开始"><svg width="16" height="16" viewBox="0 0 16 16" fill="#fff"><path d="M0 2.300l6.500-.9v6.100H0zM7.300 1.300L16 0v7.500H7.300zM0 8.300h6.500v6.200L0 13.600zM7.300 8.300H16V16l-8.700-1.300z" /></svg></button>
      <label class="ask">
        <svg width="22" height="22" viewBox="0 0 22 22"><circle cx="11" cy="11" r="9" fill="none" stroke="#eee" stroke-width="2.800" /></svg>
        <input aria-label="搜索" placeholder="在这里输入你要搜索的内容" />
        <svg width="14" height="18" viewBox="0 0 14 18" fill="none" stroke="#9c9c9c"><path d="M4.500 1.500h5v10h-5zM2 10v3.500h10V10M7 14v3M4 17h6" /></svg>
      </label>
      <nav class="tasks">
        ${TASKS.map((t) => html`<button class="task ${t.kind ?? ""}" aria-label=${t.name}><svg width="28" height="28" viewBox="0 0 28 28">${t.art}</svg></button>`)}
      </nav>
      <span class="links">链接</span>
      <div class="tray">
        <svg width="14" height="16" viewBox="0 0 14 16"><path d="M2 10l5-5 5 5" stroke-width="1.300" /></svg>
        <svg width="18" height="16" viewBox="0 0 18 16"><path d="M6.500 4.500h9v8h-9zM16 7h1v3h-1M3.500 2v3M1.500 5h4v3l-2 1.500L1.500 8zM3.500 9v4h3" /><path d="M8 6h6v5H8z" fill="#fff" stroke="none" /></svg>
        <svg width="16" height="16" viewBox="0 0 16 16"><path d="M1 14C3 8 7 4 14 3M4 15c1-5 4-8 10-8.500M7 15c1-3 3-5 7-5.500M10 15c1-2 2-2.500 4-3" /></svg>
        <svg width="18" height="16" viewBox="0 0 18 16"><path d="M1 6h3l4-4v12l-4-4H1zM10 5.500c1.500 1.500 1.500 3.500 0 5M12.500 3.500c2.500 2.500 2.500 6.500 0 9M15 2c3 3.500 3 8.500 0 12" /></svg>
        <svg width="24" height="16" viewBox="0 0 24 16"><path d="M.500 2.500h22v11H.500zM6 11.500h11" /><path d="M3 5.500h17M3 8.500h17" stroke-dasharray="1 1" /></svg>
        <span class="lang">中</span>
        <svg width="26" height="18" viewBox="0 0 26 18"><path d="M9 2l14-1 1 14-13 2z" fill="#f2501e" stroke="none" /><path d="M20 5c-3-1.500-7-.5-6 2s6 .5 6 3-4 3-7 2" stroke-width="2" /></svg>
        <time class="clock">22:50<br />2018/2/16</time>
      </div>
      <button class="center" aria-label="通知">
        <svg width="30" height="30" viewBox="0 0 30 30"><path d="M1 4h16v13h-8l-3 3v-3H1z" fill="#fff" /><path d="M4 7.500h10M4 10.500h10M4 13.500h10" stroke="#111" /><circle cx="17" cy="20" r="9" fill="#3c4143" stroke="#777" /><text x="17" y="24" fill="#fff" font-size="11" font-weight="bold" text-anchor="middle" font-family="Open Sans">20</text></svg>
      </button>
    </footer>`;
  }

  render() {
    return html`
      <header class="title">
        ${icon("app")}
        <h1>广联达BIM钢筋算量软件 GGJ2013 - [C:\\Users\\Administrator.PC-20141127NRHM\\Desktop\\白龙村-2018-02-02-19-24-35(2666版).GGJ12]</h1>
        <div class="caption">
          <button aria-label="最小化"><svg width="16" height="16" viewBox="0 0 16 16"><path d="M3 8.500h10" /></svg></button>
          <button aria-label="还原"><svg width="16" height="16" viewBox="0 0 16 16"><path d="M3.500 5.500h7v7h-7zM5.500 5.500v-2h7v7h-2" /></svg></button>
          <button aria-label="关闭"><svg width="16" height="16" viewBox="0 0 16 16"><path d="M3 3l10 10M13 3L3 13" /></svg></button>
        </div>
      </header>
      <div class="ball">73</div>
      <nav class="menubar">
        <div class="menus">
          ${MENUS.map((m) => html`<button>${m}</button>`)}
          ${toolButton({ icon: "change", text: "新建变更", menu: true })}${toolButton({ icon: "robot", text: "广小二" })}
        </div>
        <div class="notice song"><a href="#">多边形定义错误</a></div>
        <div class="account">${icon("user")}<span>13907298339</span>${arrow}<span class="beans">造价豆:0</span>${icon("bell", 12)}${more}</div>
      </nav>
      <div class="toolbars">
        <div class="band">
          ${toolButton({ icon: "file" })}${toolButton({ icon: "open", menu: true })}${toolButton({ icon: "save" })}${sep}${toolButton({ icon: "undo", menu: true })}${more}
        </div>
        <div class="band">${DRAW_TOOLS.map(toolButton)}${more}</div>
        <div class="band view">
          <label class="mode">${icon("flat")}<select aria-label="视图模式"><option>二维</option></select>${arrow}</label>
          ${VIEW_TOOLS.map(toolButton)}${more}
        </div>
      </div>
      <div class="work">
        <aside class="nav">
          <div class="navhead"><span>模块导航栏</span>${icon("pin", 15)}${icon("close", 15)}</div>
          <button class="navbtn">工程设置</button>
          <button class="navbtn on">绘图输入</button>
          <div class="navtools"><button aria-label="全部展开">${icon("expand")}</button><button aria-label="全部折叠">${icon("collapse")}</button></div>
          <div class="navtree" role="tree">${this.tree(COMPONENTS, "自定义线(X)", "picked")}</div>
          <button class="navbtn">单构件输入</button>
          <button class="navbtn">报表预览</button>
        </aside>
        <main class="main">
          <div class="band">
            ${toolButton({ icon: "create", text: "新建", menu: true })}${toolButton({ icon: "cross", text: "删除" })}${toolButton({ icon: "copy", text: "复制" })}${toolButton({ icon: "rename", text: "重命名" })}${sep}
            <div class="floor"><label for="floor">楼层</label><span class="combo"><select id="floor"><option>第2层</option></select>${arrow}</span></div>
            ${sep}${toolButton({ icon: "sort", text: "排序", menu: true })}${toolButton({ icon: "filter", text: "过滤", menu: true })}${sep}
            ${toolButton({ icon: "fromFloor", text: "从其他楼层复制构件" })}${toolButton({ icon: "toFloor", text: "复制构件到其他楼层" })}${sep}
            ${toolButton({ text: "查找", menu: true })}${sep}${toolButton({ icon: "up", text: "上移" })}${toolButton({ icon: "down", text: "下移", off: true })}
          </div>
          <div class="panes">
            <div class="listpane">
              <div class="find"><input aria-label="搜索构件" placeholder="搜索构件..." /><button aria-label="搜索">${icon("lens")}</button></div>
              <div class="list" role="tree">${this.tree(LINES, "ZDYX-7", "chosen")}</div>
            </div>
            <div class="props">
              <div class="tabs" role="tablist"><button role="tab">属性编辑</button></div>
              <div class="tablebox">
                <table>
                  <colgroup><col class="cn" /><col class="cname" /><col /></colgroup>
                  <thead><tr><th></th><th>属性名称</th><th class="hot"></th></tr></thead>
                  <tbody>
                    ${PROPERTIES.map((p, i) => html`<tr class=${p.kind ?? ""}><th>${mixed(String(i + 1))}</th><td class="pname">${mixed(p.name)}</td><td class="pval">${mixed(p.value)}</td></tr>`)}
                  </tbody>
                </table>
              </div>
            </div>
          </div>
        </main>
      </div>
      <div class="status">
        <div class="s1"></div><div class="s2">${mixed("层高:4.5m")}</div><div class="s3">${mixed("底标高:4.45m")}</div><div class="s4">${mixed("0")}</div><div class="s5">名称在当前层当前构件类型下不允许重名</div><div class="s6">${mixed("370.4 FPS")}</div>
      </div>
      ${this.taskbar()}${this.sectionWindow()}
      <div class="ime">
        <svg width="28" height="28" viewBox="0 0 28 28"><path d="M2 4l21-4 4 22-20 5z" fill="#f2501e" /><path d="M20 7C15 4 7 6 9 11c2 4 11 1 11 6 0 4-8 5-12 3" fill="none" stroke="#fff" stroke-width="3.500" /></svg>
        <span>中</span>
        <svg width="14" height="16" viewBox="0 0 14 16"><circle cx="3" cy="4" r="1.800" fill="none" stroke="currentColor" stroke-width="1.300" /><path d="M8 8h4c0 3-1 4-3.500 5.500 1-1.500 1.300-2.500-.5-3z" fill="currentColor" /></svg>
        <svg width="126" height="16" viewBox="0 0 126 16" fill="none" stroke="currentColor" stroke-width="1.800"><circle cx="8" cy="8" r="7" /><path d="M5 9c1 3 5 3 6 0M30 1v7M25 8c1 5 9 5 10 0M30 12v3M27 15h6M46 2h14v12H46zM49 10h8" /><path d="M71 4h8v10h-8z" stroke="#b0b0b0" /><path d="M94 4h8v10h-8zM114 13l8-8" stroke-width="3" /></svg>
      </div>
      ${this.dialog()}
      <svg class="marks" aria-hidden="true"><ellipse cx="667" cy="183" rx="97" ry="41" /><ellipse cx="324" cy="288" rx="88" ry="43" /></svg>
      <div class="toast" role="alert">
        <svg width="13" height="14" viewBox="0 0 13 14" fill="none" stroke="#ddd"><path d="M1.500 1.500h10v5h-10zM1.500 6.500v5h5v-10" /></svg>
        <p>正在安装新键盘。点按可选择要使用此键盘执行的操作。</p>
      </div>
    `;
  }
}
